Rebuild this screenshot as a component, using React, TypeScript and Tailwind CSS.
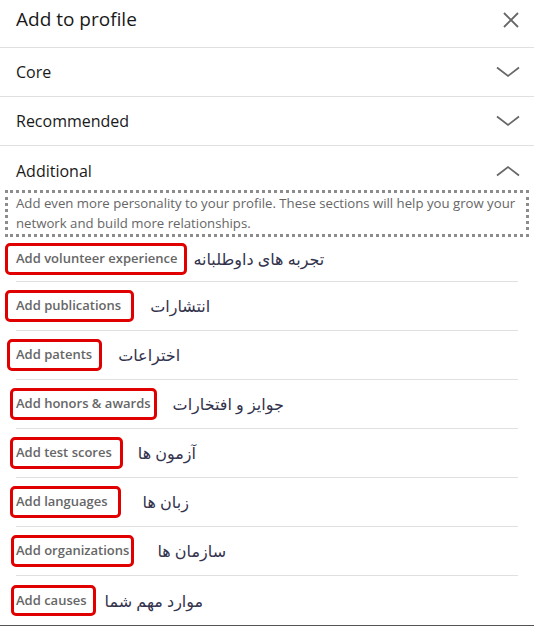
const items = [
  { en: 'Add volunteer experience', fa: 'تجربه های داوطلبانه', box: 'ml-[-11px] pl-[8px] pr-[7px]', gap: 'ml-[6px]' },
  { en: 'Add publications', fa: 'انتشارات', box: 'ml-[-11px] pl-[8px] pr-[10px]', gap: 'ml-[16px]' },
  { en: 'Add patents', fa: 'اختراعات', box: 'ml-[-9px] pl-[6px] pr-[7px]', gap: 'ml-[16px]' },
  { en: 'Add honors & awards', fa: 'جوایز و افتخارات', box: 'ml-[-6px] pl-[3px] pr-[3px]', gap: 'ml-[16px]' },
  { en: 'Add test scores', fa: 'آزمون ها', box: 'ml-[-6px] pl-[3px] pr-[8px]', gap: 'ml-[15px]' },
  { en: 'Add languages', fa: 'زبان ها', box: 'ml-[-6px] pl-[3px] pr-[10px]', gap: 'ml-[22px]' },
  { en: 'Add organizations', fa: 'سازمان ها', box: 'ml-[-5px] pl-[2px] pr-[2px]', gap: 'ml-[23px]' },
  { en: 'Add causes', fa: 'موارد مهم شما', box: 'ml-[-5px] pl-[2px] pr-[6px]', gap: 'ml-[9px]' },
];

function Chevron({ up = false }: { up?: boolean }) {
  return (
    <svg width="24" height="12" viewBox="0 0 24 12" className="text-[#666]">
      <path
        d={up ? 'M1 10.5 L12 2 L23 10.5' : 'M1 1.5 L12 10 L23 1.5'}
        fill="none"
        stroke="currentColor"
        strokeWidth="1.7"
      />
    </svg>
  );
}

function SectionHeader({ title, open, className }: { title: string; open?: boolean; className: string }) {
  return (
    <div className={`flex items-center justify-between pl-4 pr-[14px] ${className}`}>
      <span className="text-[16px] text-[#191919]">{title}</span>
      <Chevron up={open} />
    </div>
  );
}

export default function App() {
  return (
    <div
      className="flex h-[626px] w-[534px] flex-col overflow-hidden border-b border-[#555] bg-white"
      style={{ fontFamily: '"Open Sans", "DejaVu Sans", sans-serif' }}
    >
      {/* Header */}
      <div className="flex h-[48px] shrink-0 items-center justify-between border-b border-[#e0e0e0] pb-[8px] pl-4 pr-[14px]">
        <h1 className="text-[19px] text-[#191919]">Add to profile</h1>
        <svg width="18" height="18" viewBox="0 0 18 18" className="text-[#666]">
          <path d="M2 2 L16 16 M16 2 L2 16" stroke="currentColor" strokeWidth="1.8" />
        </svg>
      </div>

      <SectionHeader title="Core" className="h-[49px] shrink-0 border-b border-[#e0e0e0]" />
      <SectionHeader title="Recommended" className="h-[49px] shrink-0 border-b border-[#e0e0e0]" />
      <SectionHeader title="Additional" open className="h-[44px] shrink-0 pt-[5px]" />

      {/* Description */}
      <p className="mx-[5px] h-[47px] shrink-0 border-[3px] border-dotted border-[#8c8c8c] px-[8px] text-[13.2px] leading-[20px] text-[#666]">
        <span className="whitespace-nowrap">
          Add even more personality to your profile. These sections will help you grow your
        </span>
        <br />
        network and build more relationships.
      </p>

      {/* Items */}
      <ul className="flex flex-col">
        {items.map((item, i) => (
          <li
            key={item.en}
            className={`mx-4 flex items-center ${i === 0 ? 'h-[45px]' : 'h-[49px]'} ${
              i < items.length - 1 ? 'border-b border-[#e0e0e0]' : ''
            }`}
          >
            <span
              className={`${item.box} rounded-[5px] border-[3px] border-[#e00000] py-[3px] text-[13px] font-semibold text-[#666]`}
            >
              {item.en}
            </span>
            <span dir="rtl" className={`${item.gap} text-[16px] text-[#33334d]`}>
              {item.fa}
            </span>
          </li>
        ))}
      </ul>
    </div>
  );
}
